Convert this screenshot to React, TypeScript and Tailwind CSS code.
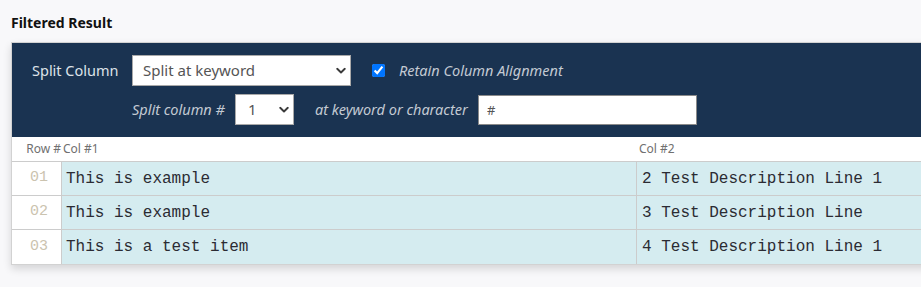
import React from "react";

const ui = { fontFamily: '"Noto Sans", "Open Sans", sans-serif' };
const mono = { fontFamily: '"Liberation Mono", "Courier New", monospace' };

function Chevron() {
  return (
    <svg
      className="pointer-events-none absolute right-[5px] top-1/2 -translate-y-1/2"
      width="10"
      height="7"
      viewBox="0 0 10 7"
    >
      <path d="M1.2 1.3 L5 5 L8.8 1.3" fill="none" stroke="#3a3a3a" strokeWidth="1.9" strokeLinecap="round" strokeLinejoin="round" />
    </svg>
  );
}

const rows = [
  { n: "01", a: "This is example", b: "2 Test Description Line 1" },
  { n: "02", a: "This is example", b: "3 Test Description Line" },
  { n: "03", a: "This is a test item", b: "4 Test Description Line 1" },
];

export default function App() {
  return (
    <div className="min-h-screen w-full overflow-hidden bg-[#f8f8fa] pl-[11px] pt-[13px]" style={ui}>
      <div className="mb-[9px] text-[14px] font-bold leading-[20px] text-[#111]">Filtered Result</div>
      <div className="w-[1000px] border border-[#d2d2d2] shadow-[0_4px_8px_rgba(0,0,0,0.14)]">
        <div className="bg-[#1a3351] pb-[12px] pl-[20px] pt-[12px]">
          <div className="flex h-[31px] items-center">
            <span className="w-[100px] text-[14.5px] text-[#dde2e8]">Split Column</span>
            <div className="relative h-[31px] w-[219px]">
              <select
                className="h-full w-full appearance-none rounded-none border border-[#a9a9a9] bg-white pl-[10px] text-[15px] text-[#555] outline-none"
                style={ui}
                defaultValue="k"
              >
                <option value="k">Split at keyword</option>
              </select>
              <Chevron />
            </div>
            <input type="checkbox" defaultChecked className="ml-[21px] m-0 h-[13px] w-[13px]" />
            <span className="ml-[14px] text-[14.5px] italic text-[#c3cad3]">Retain Column Alignment</span>
          </div>
          <div className="mt-[8px] flex h-[31px] items-center pl-[100px]">
            <span className="w-[103px] text-[14.5px] italic text-[#c3cad3]">Split column #</span>
            <div className="relative h-[31px] w-[59px]">
              <select
                className="h-full w-full appearance-none rounded-none border border-[#a9a9a9] bg-white pl-[12px] text-[15px] text-[#555] outline-none"
                style={ui}
                defaultValue="1"
              >
                <option value="1">1</option>
              </select>
              <Chevron />
            </div>
            <span className="ml-[21px] w-[163px] text-[14.5px] italic text-[#c3cad3]">at keyword or character</span>
            <input
              type="text"
              defaultValue="#"
              className="h-[30px] w-[219px] rounded-none border border-[#8a8a8a] bg-white pl-[8px] text-[13px] text-[#555] outline-none"
              style={ui}
            />
          </div>
        </div>
        <div className="flex h-[25px] items-center border-b border-[#cccccc] bg-white text-[12px] text-[#707070]">
          <div className="w-[50px] pr-[1px] text-right">Row #</div>
          <div className="w-[575px] pl-[1px]">Col #1</div>
          <div className="flex-1 pl-[2px]">Col #2</div>
        </div>
        {rows.map((r, i) => (
          <div
            key={r.n}
            className={`flex h-[34px] ${i < rows.length - 1 ? "border-b border-[#cccccc]" : "h-[33px]"}`}
          >
            <div className="flex w-[50px] items-center justify-end border-r border-[#cccccc] bg-white pr-[13px] text-[15px] text-[#cbc3af]" style={mono}>
              {r.n}
            </div>
            <div className="flex w-[575px] items-center border-r border-[#cccccc] bg-[#d5ecf0] pl-[4px] text-[16px] text-[#2b2b33]" style={mono}>
              <span className="whitespace-pre">{r.a}</span>
            </div>
            <div className="flex flex-1 items-center bg-[#d5ecf0] pl-[5px] text-[16px] text-[#2b2b33]" style={mono}>
              <span className="whitespace-pre">{r.b}</span>
            </div>
          </div>
        ))}
      </div>
    </div>
  );
}
